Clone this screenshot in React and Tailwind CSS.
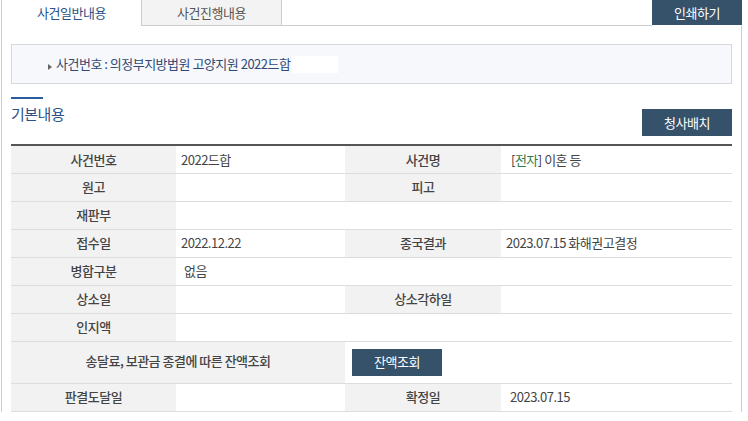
import React from "react";

const font = {
  fontFamily: '"Noto Sans CJK KR", "Noto Sans", sans-serif',
};

const Label = ({ children, className = "", ...rest }) => (
  <td
    className={`bg-[#f2f2f2] text-center text-[13px] font-medium text-[#444] ${className}`}
    {...rest}
  >
    {children}
  </td>
);

const Value = ({ children, className = "", ...rest }) => (
  <td className={`pl-[5px] text-[13px] text-[#444] ${className}`} {...rest}>
    {children}
  </td>
);

export default function App() {
  return (
    <div
      className="w-[748px] h-[421px] overflow-hidden bg-white tracking-[-0.5px]"
      style={font}
    >
      <div className="flex h-[26px] items-stretch">
        <div className="ml-[1px] flex w-[140px] items-center justify-center border-l border-[#ccc] text-[13px] text-[#2b5287]">
          사건일반내용
        </div>
        <div className="flex w-[141px] items-center justify-center border-x border-b border-[#ccc] bg-[#f3f3f3] text-[13px] text-[#555]">
          사건진행내용
        </div>
        <div className="flex-1 border-b border-[#ccc]" />
        <button className="mb-[1px] flex w-[90px] items-center justify-center bg-[#36516a] text-[13px] text-white">
          인쇄하기
        </button>
        <div className="w-[6px]" />
      </div>

      <div className="ml-[1px] w-[741px] border-x border-[#ccc] px-[9px] pt-[18px]">
        <div className="flex h-[40px] items-center border border-[#d5d8dd] bg-[#f7f8fb] pl-[36px] text-[13px] text-[#2f4a75]">
          <span className="mr-[4px] mt-[6px] inline-block h-0 w-0 border-y-[3px] border-l-[4px] border-y-transparent border-l-[#666]" />
          <span>사건번호 : 의정부지방법원 고양지원 2022드합</span>
          <span className="ml-[2px] inline-block h-[17px] w-[46px] bg-white" />
        </div>

        <div className="mt-[13px] flex items-end justify-between">
          <div>
            <div className="h-[2px] w-[32px] bg-[#2a5d9b]" />
            <div className="mt-[4px] text-[15px] leading-[22px] text-[#2b5287]">
              기본내용
            </div>
          </div>
          <button className="mb-[-11px] flex h-[27px] w-[90px] items-center justify-center bg-[#36516a] text-[13px] text-white">
            청사배치
          </button>
        </div>

        <table className="mt-[19px] w-[721px] table-fixed border-collapse border-t-2 border-[#555]">
          <colgroup>
            <col className="w-[165px]" />
            <col className="w-[169px]" />
            <col className="w-[156px]" />
            <col className="w-[231px]" />
          </colgroup>
          <tbody>
            <tr className="h-[28px] border-b border-[#ddd]">
              <Label>사건번호</Label>
              <Value>2022드합</Value>
              <Label>사건명</Label>
              <Value className="pl-[10px]">
                <span className="text-[#333]">[</span>
                <span className="text-[#2e7d4a]">전자</span>
                <span className="text-[#333]">]</span> 이혼 등
              </Value>
            </tr>
            <tr className="h-[28px] border-b border-[#ddd]">
              <Label>원고</Label>
              <Value />
              <Label>피고</Label>
              <Value />
            </tr>
            <tr className="h-[28px] border-b border-[#ddd]">
              <Label>재판부</Label>
              <Value colSpan={3} />
            </tr>
            <tr className="h-[28px] border-b border-[#ddd]">
              <Label>접수일</Label>
              <Value>2022.12.22</Value>
              <Label>종국결과</Label>
              <Value>2023.07.15 화해권고결정</Value>
            </tr>
            <tr className="h-[28px] border-b border-[#ddd]">
              <Label>병합구분</Label>
              <Value colSpan={3} className="pl-[8px]">
                없음
              </Value>
            </tr>
            <tr className="h-[28px] border-b border-[#ddd]">
              <Label>상소일</Label>
              <Value />
              <Label>상소각하일</Label>
              <Value />
            </tr>
            <tr className="h-[28px] border-b border-[#ddd]">
              <Label>인지액</Label>
              <Value colSpan={3} />
            </tr>
            <tr className="h-[42px] border-b border-[#ddd]">
              <Label className="pb-[3px]" colSpan={2}>
                송달료, 보관금 종결에 따른 잔액조회
              </Label>
              <td colSpan={2} className="pl-[7px]">
                <button className="flex h-[27px] w-[90px] items-center justify-center bg-[#36516a] text-[13px] text-white">
                  잔액조회
                </button>
              </td>
            </tr>
            <tr className="h-[28px] border-b border-[#ddd]">
              <Label>판결도달일</Label>
              <Value />
              <Label>확정일</Label>
              <Value className="pl-[9px]">2023.07.15</Value>
            </tr>
          </tbody>
        </table>
      </div>
    </div>
  );
}
